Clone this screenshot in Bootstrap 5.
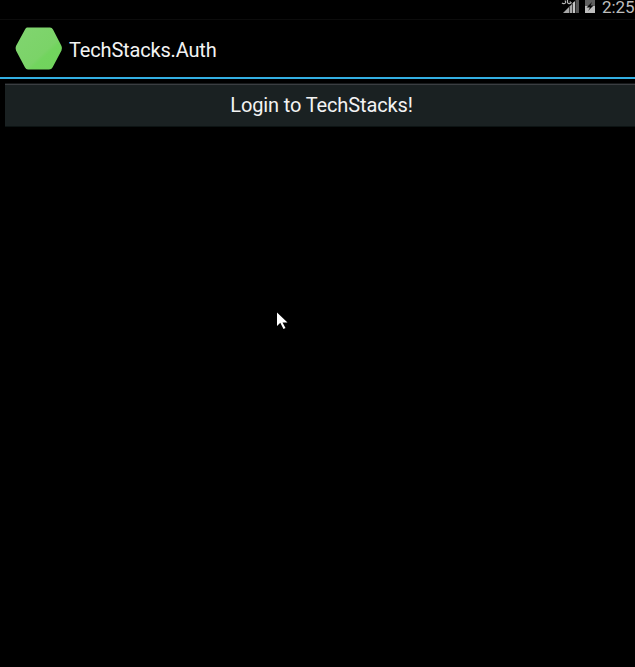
<!DOCTYPE html>
<html lang="en">
<head>
<meta charset="utf-8">
<meta name="viewport" content="width=device-width, initial-scale=1">
<title>TechStacks.Auth</title>
<link href="https://cdn.jsdelivr.net/npm/bootstrap@5.3.0/dist/css/bootstrap.min.css" rel="stylesheet">
<style>
body{background:#000;color:#f3f3f3;font-family:Roboto,sans-serif;height:667px}
.status-bar{height:19px}
.clock{font-size:17px;line-height:17px;color:#bebebe;margin-left:6px;margin-top:-1px;white-space:nowrap;width:33px;letter-spacing:-.1px}
.signal{margin-right:5px}
.action-bar{height:60px;border-top:1px solid #0c0c0c;border-bottom:2px solid #33afe3;padding:0 0 0 15px}
.title{font-size:20px;line-height:24px;margin-left:6px;margin-top:3px;letter-spacing:-.17px}
.login-wrap{padding:4px 0 0 5px}
.login-btn{height:44px;background:#1a2122;color:#f3f3f3;border:0;border-top:1px solid #16191a;border-bottom:1px solid #0c1313;box-shadow:inset 0 1px #3b3e42;font-size:20px;line-height:24px;padding:0 0 1px 3px;letter-spacing:-.13px}
.login-btn:hover{background:#1a2122;color:#f3f3f3}
.pointer{left:276px;top:311px}
</style>
<script src="https://cdn.jsdelivr.net/npm/bootstrap@5.3.0/dist/js/bootstrap.bundle.min.js"></script>
</head>
<body class="overflow-hidden position-relative">
<div class="status-bar d-flex justify-content-end align-items-start">
  <svg class="signal" width="18" height="14" viewBox="0 0 18 14">
    <path d="M2 13 13 2v11z" fill="#a8a8a8"/>
    <path d="M12 3 14 1v12h-2z" fill="#c4c4c4"/>
    <path d="M14.500 0H18v13h-3.500z" fill="#555"/>
    <path d="M8.500 6v7M11.500 4v9" stroke="#444" stroke-width="1"/>
    <path d="M0 0h10v4L8 6H4L0 3z" fill="#000"/>
    <path d="M4 0.500Q5.500 3 3.500 3.500Q2 4 1 2.800M10 2H8.500M10 2v1Q7.500 4.500 6.500 2.500V0" fill="none" stroke="#b5b5b5" stroke-width="1.200"/>
  </svg>
  <svg width="12" height="14" viewBox="0 0 12 14">
    <path d="M1 0h10v6H1z" fill="#606060"/>
    <path d="M1 6h10v7H1z" fill="#bebebe"/>
    <path d="M8 2 2.500 7.500H6L4 11 9.500 5.500H6.500z" fill="#080808"/>
  </svg>
  <span class="clock">2:25</span>
</div>
<header class="action-bar d-flex align-items-center">
  <svg width="48" height="44" viewBox="0 0 48 44">
    <defs><linearGradient id="leaf" x1="0" y1="0" x2="1" y2="1"><stop offset="0" stop-color="#81d570"/><stop offset=".6" stop-color="#7bd368"/><stop offset=".66" stop-color="#72d45e"/><stop offset="1" stop-color="#70d35c"/></linearGradient></defs>
    <path d="M12 .5H35Q37 .5 38 2.500L46.500 19Q47.500 21.500 46.500 23.500L37.500 40.500Q36.500 42.500 34 42.500H13Q11 42.500 10 40.500L1 23.500Q0 21.500 1 19L10 2.500Q11 .5 12 .5Z" fill="url(#leaf)"/>
  </svg>
  <h1 class="title fw-normal mb-0">TechStacks.Auth</h1>
</header>
<main class="login-wrap">
  <button type="button" class="login-btn btn w-100 rounded-0">Login to TechStacks!</button>
</main>
<svg class="pointer position-absolute" width="13" height="19" viewBox="0 0 13 19">
  <path d="M1 1.500V15l3.300-3.200L7.500 18l2-1-3-5.500h5z" fill="#fff"/>
</svg>
</body>
</html>
